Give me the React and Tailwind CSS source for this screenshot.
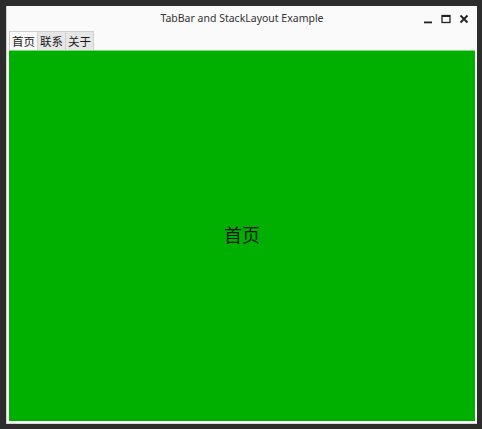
import React, { useState } from 'react';

const pages = ['首页', '联系', '关于'];

const App = () => {
  const [current, setCurrent] = useState(0);

  return (
    <div className="w-[482px] h-[429px] bg-[#2c2c2c] pt-[6px] pl-[6px] pr-[5px] pb-[5px] font-['Noto_Sans','Noto_Sans_CJK_SC',sans-serif]">
      <div className="w-full h-full bg-[#fafafa] flex flex-col border-l border-[#d0d0d0]">
        {/* title bar */}
        <div className="h-[25px] relative flex items-center justify-center shrink-0">
          <span className="text-[10.5px] text-[#333] mt-[1px]">TabBar and StackLayout Example</span>
          <div className="absolute right-[8px] top-[8px] flex items-center gap-[8px] text-[#222]">
            <svg width="10" height="10" viewBox="0 0 10 10">
              <rect x="1" y="7.5" width="8" height="1.8" fill="#222" />
            </svg>
            <svg width="10" height="10" viewBox="0 0 10 10">
              <rect x="1" y="1.5" width="8" height="7" fill="none" stroke="#222" strokeWidth="1.3" />
              <rect x="1" y="1.5" width="8" height="1.5" fill="#222" />
            </svg>
            <svg width="10" height="10" viewBox="0 0 10 10">
              <path d="M1.5 1.5 L8.5 8.5 M8.5 1.5 L1.5 8.5" stroke="#222" strokeWidth="1.9" />
            </svg>
          </div>
        </div>

        {/* tab bar */}
        <div className="flex h-[19px] pl-[2px] shrink-0 items-end">
          {pages.map((p, i) => (
            <button
              key={p}
              onClick={() => setCurrent(i)}
              className={`h-full px-0 pt-[1px] whitespace-nowrap text-[11.5px] leading-none text-[#1a1a1a] border border-b-0 border-[#cfcfcf] ${
                i === current ? 'bg-[#fafafa] w-[29px]' : 'bg-[#e6e6e6] w-[28px] border-l-0'
              }`}
            >
              {p}
            </button>
          ))}
        </div>

        {/* stack layout */}
        <div className="flex-1 pl-[2px] pr-[2px] pb-[2px] flex">
          <div className="flex-1 bg-[#00b000] border-t border-[#7fd87f] flex items-center justify-center">
            <span className="text-[18px] text-[#111] mb-[1px]">{pages[current]}</span>
          </div>
        </div>
        <div className="h-[1px] bg-[#d8d8d8]" />
      </div>
    </div>
  );
};

export default App;
